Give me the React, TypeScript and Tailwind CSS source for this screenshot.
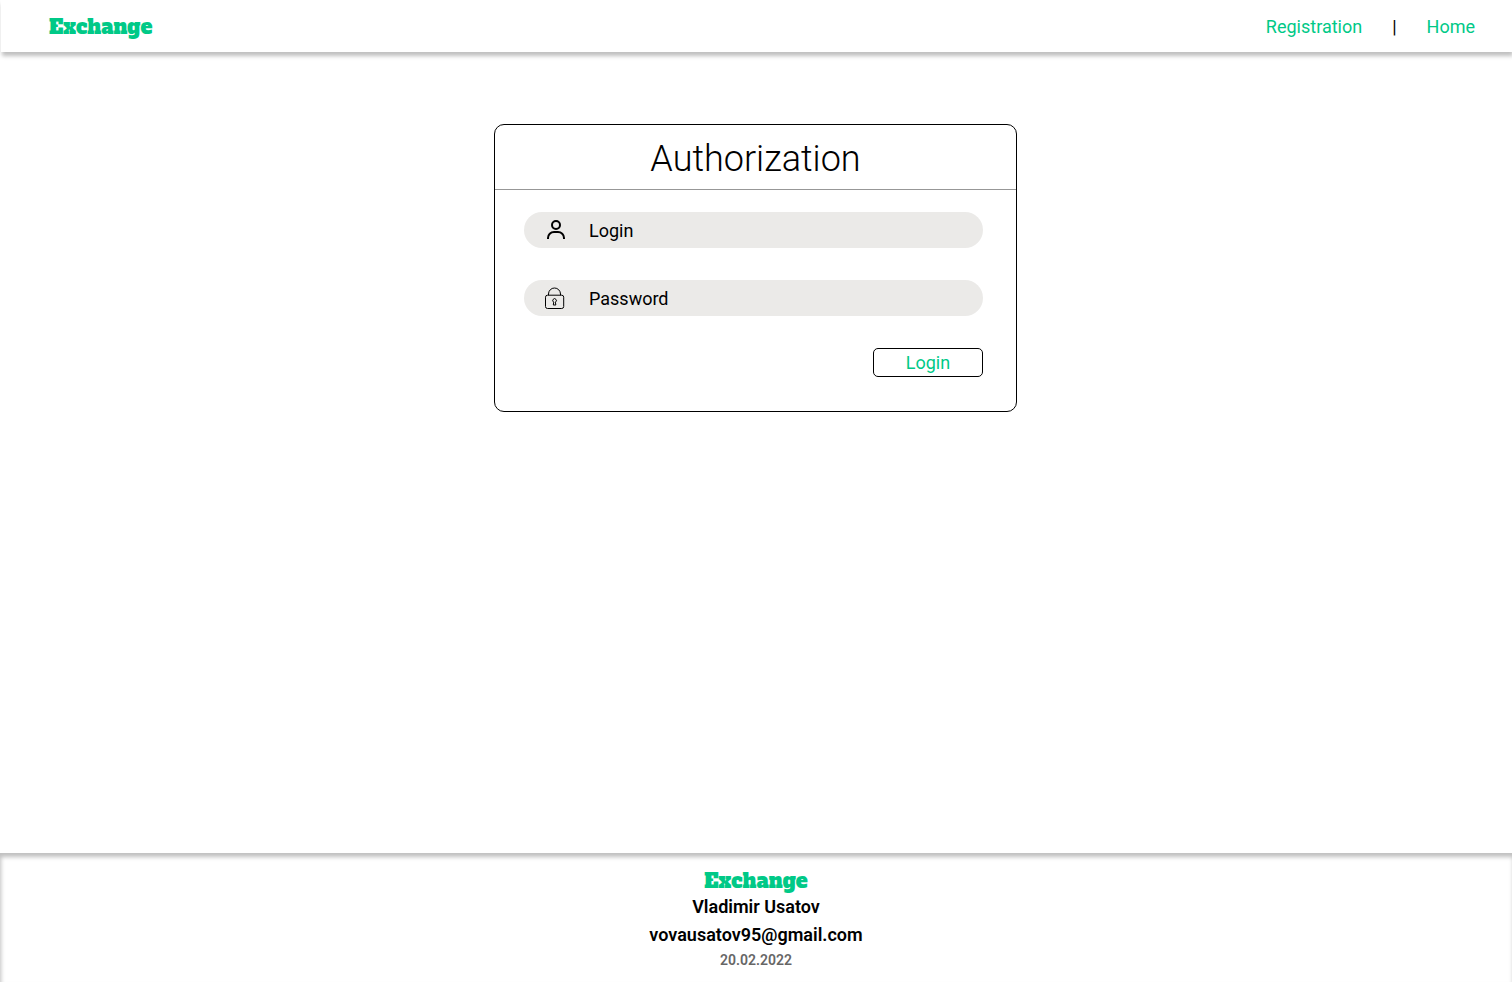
import React from "react";

function Logo() {
  return (
    <span className="pt-0.5 font-['Alfa_Slab_One','DejaVu_Serif_Condensed','DejaVu_Serif',serif] text-xl leading-7 font-normal text-[#00c987]">
      Exchange
    </span>
  );
}

function UserIcon() {
  return (
    <svg className="size-6" viewBox="0 0 24 24" fill="none" stroke="black" strokeWidth="2" aria-hidden="true">
      <circle cx="12" cy="7" r="4" />
      <path d="M4 21v-1a6 6 0 0 1 6-6h4a6 6 0 0 1 6 6v1" />
    </svg>
  );
}

function LockIcon() {
  return (
    <svg className="size-6" viewBox="0 0 24 24" fill="none" stroke="black" aria-hidden="true">
      <rect x="1.5" y="9.2" width="18.2" height="13.3" rx="2" />
      <path d="M4.5 9.2V8a6 6 0 0 1 12 0v1.2" />
      <path d="M9.7 16.1a1.8 1.8 0 1 1 1.7 0l.4 2.9H9.3z" />
    </svg>
  );
}

type FieldProps = {
  id: string;
  label: string;
  type: string;
  icon: React.ReactNode;
};

function Field({ id, label, type, icon }: FieldProps) {
  return (
    <div className="flex h-9 items-center gap-[21px] rounded-full bg-[#ebeae8] px-5">
      <label htmlFor={id} className="shrink-0">
        {icon}
      </label>
      <input
        id={id}
        type={type}
        aria-label={label}
        placeholder={label}
        className="min-w-0 flex-1 bg-transparent pt-0.5 text-lg leading-6 outline-none placeholder:text-black"
      />
    </div>
  );
}

export default function App() {
  return (
    <div className="flex min-h-screen flex-col bg-white font-[Roboto,sans-serif] text-black">
      <header className="ml-px flex h-13 items-center justify-between pr-[37px] pl-12 shadow-[1px_4px_4px_rgba(0,0,0,0.25)]">
        <Logo />
        <nav className="flex items-center gap-[30px] pt-0.5 text-lg leading-6">
          <a href="#registration" className="text-[#00c987]">
            Registration
          </a>
          <span aria-hidden="true">|</span>
          <a href="#home" className="text-[#00c987]">
            Home
          </a>
        </nav>
      </header>

      <main className="flex flex-1 flex-col items-center pt-18 pr-[17px] pb-8 pl-4">
        <form
          className="w-full max-w-[523px] rounded-[10px] border border-black"
          onSubmit={(event) => event.preventDefault()}
        >
          <h1 className="border-b border-[#979797] pt-2.5 pb-1.5 text-center text-4xl leading-12 font-light">
            Authorization
          </h1>
          <div className="flex flex-col gap-8 pt-[22px] pr-[33px] pb-[34px] pl-[29px]">
            <Field id="login" label="Login" type="text" icon={<UserIcon />} />
            <Field id="password" label="Password" type="password" icon={<LockIcon />} />
            <button
              type="submit"
              className="h-[29px] w-[110px] self-end rounded-[5px] border border-black text-lg leading-6 text-[#00c987]"
            >
              Login
            </button>
          </div>
        </form>
      </main>

      <footer className="flex flex-col items-center pt-3 pb-3 shadow-[inset_1px_4px_4px_rgba(0,0,0,0.25)]">
        <Logo />
        <p className="text-lg leading-6 font-semibold">Vladimir Usatov</p>
        <p className="pt-1 text-lg leading-6 font-semibold">vovausatov95@gmail.com</p>
        <p className="pt-[3px] text-sm leading-5 font-semibold text-[#666666]">20.02.2022</p>
      </footer>
    </div>
  );
}
